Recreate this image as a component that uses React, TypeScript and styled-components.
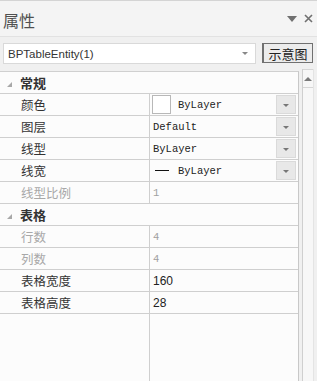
import React from "react";
import styled, { createGlobalStyle } from "styled-components";

const Global = createGlobalStyle`
  html, body { margin: 0; padding: 0; background: #f0f0f0; }
  body { width: 317px; height: 381px; overflow: hidden; }
`;

const Panel = styled.div`
  width: 317px;
  height: 381px;
  display: flex;
  flex-direction: column;
  background: #f0f0f0;
  border-top: 1px solid #d4d4d4;
  box-sizing: border-box;
  font-family: "Noto Sans CJK SC", sans-serif;
`;

const Header = styled.div`
  height: 35px;
  display: flex;
  align-items: center;
  justify-content: space-between;
  padding: 0 4px 0 3px;
  background: #f4f4f4;
  border-bottom: 1px solid #e2e2e2;
`;

const Title = styled.div`
  font-size: 16px;
  color: #505050;
  line-height: 18px;
  margin-top: 2px;
`;

const HeaderIcons = styled.div`
  display: flex;
  align-items: center;
  gap: 7px;
  color: #666;
`;

const Toolbar = styled.div`
  height: 34px;
  display: flex;
  align-items: flex-start;
  padding: 6px 4px 0 3px;
  box-sizing: border-box;
  gap: 6px;
`;

const Combo = styled.div`
  width: 253px;
  height: 21px;
  box-sizing: border-box;
  background: #fff;
  border: 1px solid #d9d9d9;
  display: flex;
  align-items: center;
  justify-content: space-between;
  padding: 0 7px 0 4px;
  font-family: "Liberation Sans", Arial, sans-serif;
  font-size: 11.5px;
  color: #333;
`;

const Button = styled.div`
  width: 51px;
  height: 20px;
  box-sizing: border-box;
  border: 1px solid #707070;
  border-left: 2px solid #707070;
  background: #ececec;
  display: flex;
  align-items: center;
  justify-content: center;
  font-size: 13px;
  color: #222;
`;

const Body = styled.div`
  flex: 1;
  display: flex;
  gap: 3px;
  min-height: 0;
`;

const Grid = styled.div`
  width: 299px;
  box-sizing: border-box;
  background: #fcfcfc;
  border-top: 1px solid #d0d0d0;
  border-right: 1px solid #c8c8c8;
  display: flex;
  flex-direction: column;
  position: relative;
`;

const Divider = styled.div`
  position: absolute;
  left: 149px;
  top: 22px;
  bottom: 0;
  width: 1px;
  background: #cfcfcf;
`;

const Row = styled.div`
  height: 22px;
  box-sizing: border-box;
  border-bottom: 1px solid #cfcfcf;
  display: flex;
  align-items: center;
  position: relative;
  z-index: 1;
`;

const Category = styled(Row)`
  background: #fcfcfc;
`;

const CatArrow = styled.div`
  width: 0;
  height: 0;
  border-left: 5px solid transparent;
  border-bottom: 5px solid #a8a8a8;
  margin: 3px 8px 0 7px;
`;

const CatLabel = styled.div`
  font-size: 13px;
  font-weight: 700;
  color: #333;
`;

const Label = styled.div<{ $disabled?: boolean }>`
  width: 149px;
  padding-left: 21px;
  box-sizing: border-box;
  font-size: 12.5px;
  color: ${(p) => (p.$disabled ? "#a8a8a8" : "#333")};
`;

const Value = styled.div<{ $disabled?: boolean; $mono?: boolean }>`
  flex: 1;
  height: 100%;
  margin-left: 1px;
  display: flex;
  align-items: center;
  padding-left: 3px;
  padding-right: 2px;
  font-family: ${(p) =>
    p.$mono ? `"Liberation Mono", monospace` : `"Liberation Sans", Arial, sans-serif`};
  font-size: ${(p) => (p.$mono ? "10.5px" : "12px")};
  color: ${(p) => (p.$disabled ? "#a0a0a0" : "#222")};
`;

const ValueText = styled.span`
  flex: 1;
`;

const Swatch = styled.div`
  width: 17px;
  height: 17px;
  border: 1px solid #b8b8b8;
  background: #fff;
  margin-right: 7px;
  margin-left: -1px;
`;

const LineSample = styled.div`
  width: 14px;
  height: 1px;
  background: #111;
  margin: 0 9px 0 2px;
`;

const DropBtn = styled.div`
  width: 20px;
  height: 19px;
  box-sizing: border-box;
  background: #e8e8e8;
  border: 1px solid #dadada;
  display: flex;
  align-items: center;
  justify-content: center;
`;

const SmallArrow = styled.div`
  width: 0;
  height: 0;
  border-left: 3px solid transparent;
  border-right: 3px solid transparent;
  border-top: 3px solid #777;
  margin-top: 1px;
`;

const ScrollBar = styled.div`
  width: 12px;
  margin-top: -2px;
  box-sizing: border-box;
  border-left: 1px solid #cfcfcf;
  border-right: 1px solid #e4e4e4;
  background: #f7f7f7;
  display: flex;
  flex-direction: column;
`;

const ScrollUp = styled.div`
  height: 17px;
  border-top: 1px solid #d6d6d6;
  border-bottom: 1px solid #d6d6d6;
  display: flex;
  align-items: center;
  justify-content: center;
`;

const UpArrow = styled.div`
  width: 0;
  height: 0;
  border-left: 4px solid transparent;
  border-right: 4px solid transparent;
  border-bottom: 4px solid #7a7a7a;
`;

type Prop = {
  label: string;
  value: string;
  disabled?: boolean;
  mono?: boolean;
  kind?: "color" | "line";
  drop?: boolean;
};

const general: Prop[] = [
  { label: "颜色", value: "ByLayer", mono: true, kind: "color", drop: true },
  { label: "图层", value: "Default", mono: true, drop: true },
  { label: "线型", value: "ByLayer", mono: true, drop: true },
  { label: "线宽", value: "ByLayer", mono: true, kind: "line", drop: true },
  { label: "线型比例", value: "1", mono: true, disabled: true },
];

const table: Prop[] = [
  { label: "行数", value: "4", mono: true, disabled: true },
  { label: "列数", value: "4", mono: true, disabled: true },
  { label: "表格宽度", value: "160" },
  { label: "表格高度", value: "28" },
];

const PropRow = ({ p }: { p: Prop }) => (
  <Row>
    <Label $disabled={p.disabled}>{p.label}</Label>
    <Value $disabled={p.disabled} $mono={p.mono}>
      {p.kind === "color" && <Swatch />}
      {p.kind === "line" && <LineSample />}
      <ValueText>{p.value}</ValueText>
      {p.drop && (
        <DropBtn>
          <SmallArrow />
        </DropBtn>
      )}
    </Value>
  </Row>
);

export default function App() {
  return (
    <>
      <Global />
      <Panel>
        <Header>
          <Title>属性</Title>
          <HeaderIcons>
            <svg width="10" height="6" viewBox="0 0 10 6">
              <path d="M0 0 H10 L5 6 Z" fill="#707070" />
            </svg>
            <svg width="9" height="9" viewBox="0 0 9 9">
              <path d="M1 1 L8 8 M8 1 L1 8" stroke="#707070" strokeWidth="1.6" />
            </svg>
          </HeaderIcons>
        </Header>
        <Toolbar>
          <Combo>
            <span>BPTableEntity(1)</span>
            <svg width="6" height="3" viewBox="0 0 6 3">
              <path d="M0 0 H6 L3 3 Z" fill="#888" />
            </svg>
          </Combo>
          <Button>示意图</Button>
        </Toolbar>
        <Body>
          <Grid>
            <Divider />
            <Category>
              <CatArrow />
              <CatLabel>常规</CatLabel>
            </Category>
            {general.map((p) => (
              <PropRow key={p.label} p={p} />
            ))}
            <Category>
              <CatArrow />
              <CatLabel>表格</CatLabel>
            </Category>
            {table.map((p) => (
              <PropRow key={p.label} p={p} />
            ))}
          </Grid>
          <ScrollBar>
            <ScrollUp>
              <UpArrow />
            </ScrollUp>
          </ScrollBar>
        </Body>
      </Panel>
    </>
  );
}
